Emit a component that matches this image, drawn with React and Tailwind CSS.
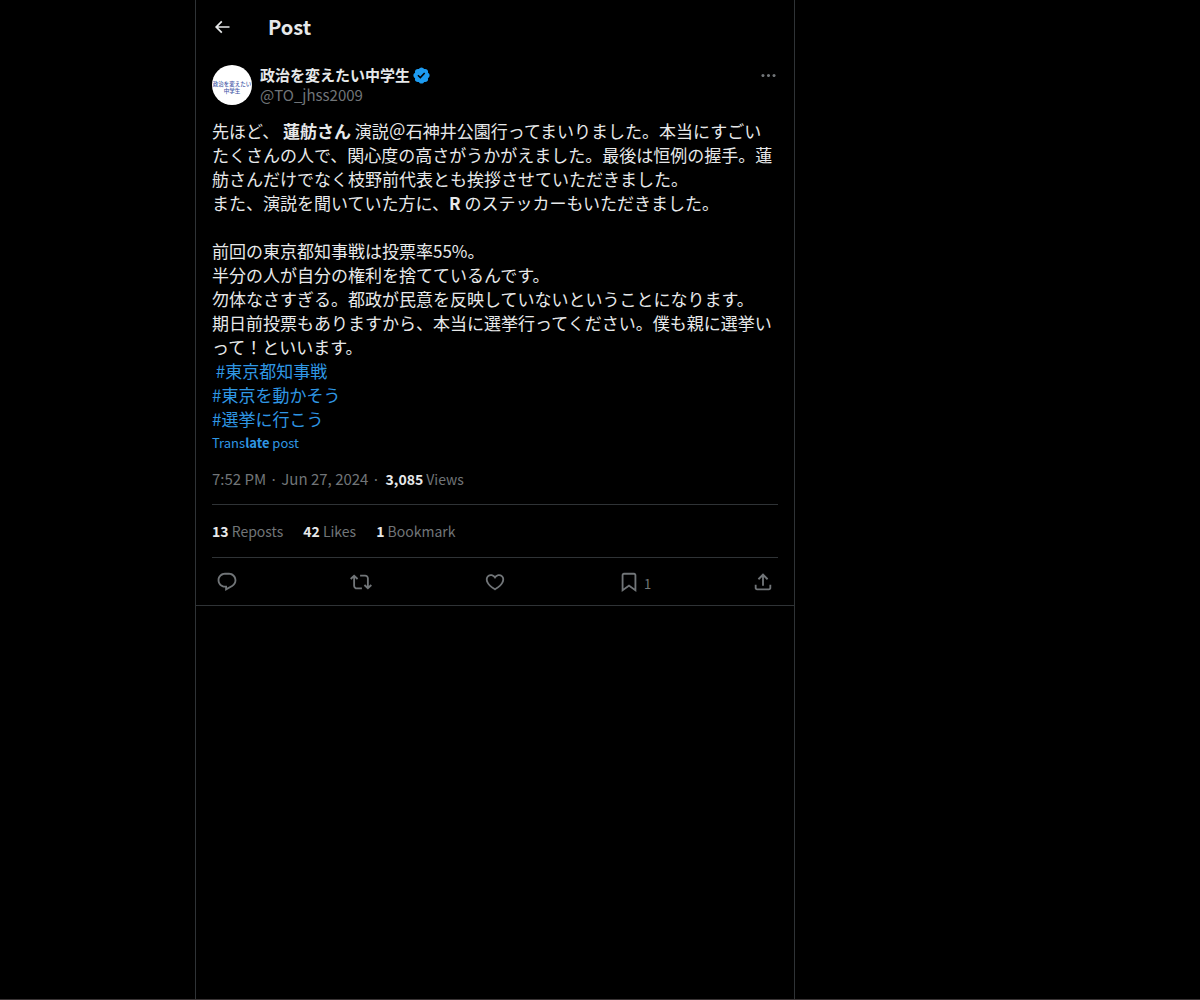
import React from "react";

const ICONS = {
  back: "M7.414 13l5.043 5.04-1.414 1.42L3.586 12l7.457-7.46 1.414 1.42L7.414 11H21v2H7.414z",
  more: "M3 12c0-1.1.9-2 2-2s2 .9 2 2-.9 2-2 2-2-.9-2-2zm9 2c1.1 0 2-.9 2-2s-.9-2-2-2-2 .9-2 2 .9 2 2 2zm7 0c1.1 0 2-.9 2-2s-.9-2-2-2-2 .9-2 2 .9 2 2 2z",
  verified:
    "M22.25 12c0-1.43-.88-2.67-2.19-3.34.46-1.39.2-2.9-.81-3.91s-2.52-1.27-3.91-.81c-.66-1.31-1.91-2.19-3.34-2.19s-2.67.88-3.33 2.19c-1.4-.46-2.91-.2-3.92.81s-1.26 2.52-.8 3.91c-1.31.67-2.2 1.91-2.2 3.34s.89 2.67 2.2 3.34c-.46 1.39-.21 2.9.8 3.91s2.52 1.26 3.91.81c.67 1.31 1.91 2.19 3.34 2.19s2.68-.88 3.34-2.19c1.39.45 2.9.2 3.91-.81s1.27-2.52.81-3.91c1.31-.67 2.19-1.91 2.19-3.34zm-11.71 4.2L6.8 12.46l1.41-1.42 2.26 2.26 4.8-5.23 1.47 1.36-6.2 6.77z",
  reply:
    "M1.751 10c0-4.42 3.584-8 8.005-8h4.366c4.49 0 8.129 3.64 8.129 8.13 0 2.96-1.607 5.68-4.196 7.11l-8.054 4.46v-3.69h-.067c-4.49.1-8.183-3.51-8.183-8.01zm8.005-6c-3.317 0-6.005 2.69-6.005 6 0 3.37 2.77 6.08 6.138 6.01l.351-.01h1.761v2.3l5.087-2.81c1.951-1.08 3.163-3.13 3.163-5.36 0-3.39-2.744-6.13-6.129-6.13H9.756z",
  repost:
    "M4.5 3.88l4.432 4.14-1.364 1.46L5.5 7.55V16c0 1.1.896 2 2 2H13v2H7.5c-2.209 0-4-1.79-4-4V7.55L1.432 9.48.068 8.02 4.5 3.88zM16.5 6H11V4h5.5c2.209 0 4 1.79 4 4v8.45l2.068-1.93 1.364 1.46-4.432 4.14-4.432-4.14 1.364-1.46 2.068 1.93V8c0-1.1-.896-2-2-2z",
  like: "M16.697 5.5c-1.222-.06-2.679.51-3.89 2.16l-.805 1.09-.806-1.09C9.984 6.01 8.526 5.44 7.304 5.5c-1.243.07-2.349.78-2.91 1.91-.552 1.12-.633 2.78.479 4.82 1.074 1.97 3.257 4.27 7.129 6.61 3.87-2.34 6.052-4.64 7.126-6.61 1.111-2.04 1.03-3.7.477-4.82-.561-1.13-1.666-1.84-2.908-1.91zm4.187 7.69c-1.351 2.48-4.001 5.12-8.379 7.67l-.503.3-.504-.3c-4.379-2.55-7.029-5.19-8.382-7.67-1.36-2.5-1.41-4.86-.514-6.67.887-1.79 2.647-2.91 4.601-3.01 1.651-.09 3.368.56 4.798 2.01 1.429-1.45 3.146-2.1 4.796-2.01 1.954.1 3.714 1.22 4.601 3.01.896 1.81.846 4.17-.514 6.67z",
  bookmark:
    "M4 4.5C4 3.12 5.119 2 6.5 2h11C18.881 2 20 3.12 20 4.5v18.44l-8-5.71-8 5.71V4.5zM6.5 4c-.276 0-.5.22-.5.5v14.56l6-4.29 6 4.29V4.5c0-.28-.224-.5-.5-.5h-11z",
  share:
    "M12 2.59l5.7 5.7-1.41 1.42L13 6.41V16h-2V6.41l-3.3 3.3-1.41-1.42L12 2.59zM21 15l-.02 3.51c0 1.38-1.12 2.49-2.5 2.49H5.5C4.11 21 3 19.88 3 18.5V15h2v3.5c0 .28.22.5.5.5h12.98c.28 0 .5-.22.5-.5L19 15h2z",
};

function Icon({ name, className }) {
  return (
    <svg viewBox="0 0 24 24" fill="currentColor" aria-hidden="true" className={className}>
      <path d={ICONS[name]} />
    </svg>
  );
}

function Avatar() {
  return (
    <svg viewBox="0 0 80 80" aria-hidden="true" className="size-10 rounded-full bg-white">
      <g fill="#3f57a6" fontSize="11" fontWeight="500" textAnchor="middle">
        <text x="40" y="41">政治を変えたい</text>
        <text x="40" y="56">中学生</text>
      </g>
    </svg>
  );
}

function Stat({ count, label }) {
  return (
    <a href="#stats">
      <span className="font-bold text-[#e7e9ea]">{count}</span> {label}
    </a>
  );
}

function Action({ name, label, count }) {
  return (
    <button type="button" aria-label={label} className="flex w-[22px] items-center">
      <Icon name={name} className="size-[22px] shrink-0" />
      {count && <span className="px-1 pt-1 text-[13px] leading-5">{count}</span>}
    </button>
  );
}

export default function App() {
  return (
    <div className="flex min-h-screen border-b border-[#3a3536] bg-black font-['Noto_Sans_CJK_JP',sans-serif] text-[15px] leading-5 text-[#e7e9ea]">
      <main className="ml-[195px] w-full max-w-[600px] border-x border-[#2f3336]">
        <header className="flex h-[53px] items-center px-4">
          <button type="button" aria-label="Back" className="w-14">
            <Icon name="back" className="size-5" />
          </button>
          <h1 className="text-xl leading-6 font-bold">Post</h1>
        </header>

        <article className="border-b border-[#2f3336] px-4 pt-3">
          <div className="flex gap-2">
            <a href="#profile" aria-label="政治を変えたい中学生" className="shrink-0">
              <Avatar />
            </a>
            <div className="min-w-0 flex-1">
              <a href="#profile" className="flex h-5 items-center gap-0.5 font-bold">
                政治を変えたい中学生
                <Icon name="verified" className="size-[19px] text-[#1d9bf0]" />
              </a>
              <a href="#profile" className="block text-[#717578]">
                @TO_jhss2009
              </a>
            </div>
            <button type="button" aria-label="More" className="flex h-5 items-center text-[#717578]">
              <Icon name="more" className="size-[19px]" />
            </button>
          </div>

          <div className="mt-[14px] text-[17px] leading-6 whitespace-pre-wrap">
            <p>
              先ほど、 <b>蓮舫さん</b> 演説＠石神井公園行ってまいりました。本当にすごいたくさんの人で、関心度の高さがうかがえました。最後は恒例の握手。蓮舫さんだけでなく枝野前代表とも挨拶させていただきました。
            </p>
            <p>
              また、演説を聞いていた方に、<b>R</b> のステッカーもいただきました。
            </p>
            <p className="mt-6">前回の東京都知事戦は投票率55%。</p>
            <p>半分の人が自分の権利を捨てているんです。</p>
            <p>勿体なさすぎる。都政が民意を反映していないということになります。</p>
            <p>期日前投票もありますから、本当に選挙行ってください。僕も親に選挙いって！といいます。</p>
            <div className="text-[#2f97e4]">
              <p>
                {" "}
                <a href="#tag1">#東京都知事戦</a>
              </p>
              <p>
                <a href="#tag2">#東京を動かそう</a>
              </p>
              <p>
                <a href="#tag3">#選挙に行こう</a>
              </p>
            </div>
          </div>
          <button type="button" className="block text-[13px] leading-6 text-[#2f97e4]">
            Trans<b>late</b> post
          </button>

          <div className="pt-[14px] pb-[15px] text-[#717578]">
            <a href="#time">7:52 PM · Jun 27, 2024</a>
            <span className="pr-0.5"> · </span>
            <span className="text-sm leading-5">
              <span className="font-bold text-[#e7e9ea]">3,085</span> Views
            </span>
          </div>

          <div className="flex gap-5 border-y border-[#2f3336] py-4 text-sm leading-5 text-[#717578]">
            <Stat count="13" label="Reposts" />
            <Stat count="42" label="Likes" />
            <Stat count="1" label="Bookmark" />
          </div>

          <div className="flex h-[47px] items-center justify-between px-1 text-[#717578]">
            <Action name="reply" label="Reply" />
            <Action name="repost" label="Repost" />
            <Action name="like" label="Like" />
            <Action name="bookmark" label="Bookmark" count="1" />
            <Action name="share" label="Share" />
          </div>
        </article>
      </main>
    </div>
  );
}
